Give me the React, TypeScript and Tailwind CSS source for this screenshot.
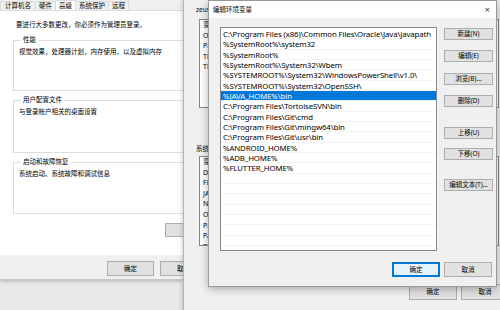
import React from 'react';
import { clsx } from 'clsx';

const paths = [
  'C:\\Program Files (x86)\\Common Files\\Oracle\\Java\\javapath',
  '%SystemRoot%\\system32',
  '%SystemRoot%',
  '%SystemRoot%\\System32\\Wbem',
  '%SYSTEMROOT%\\System32\\WindowsPowerShell\\v1.0\\',
  '%SYSTEMROOT%\\System32\\OpenSSH\\',
  '%JAVA_HOME%\\bin',
  'C:\\Program Files\\TortoiseSVN\\bin',
  'C:\\Program Files\\Git\\cmd',
  'C:\\Program Files\\Git\\mingw64\\bin',
  'C:\\Program Files\\Git\\usr\\bin',
  '%ANDROID_HOME%',
  '%ADB_HOME%',
  '%FLUTTER_HOME%',
];

const userVars = ['变', 'Or', 'Pa', 'TE', 'TM'];
const sysVars = ['变', 'Dr', 'FL', 'JA', 'NU', 'OS', 'Pa', 'PA', 'PR'];

const tabs = [
  { label: '计算机名', w: 'w-[36px]' },
  { label: '硬件', w: 'w-[21px]' },
  { label: '高级', w: 'w-[21px]', active: true },
  { label: '系统保护', w: 'w-[34px]' },
  { label: '远程', w: 'w-[21px]' },
];

function Btn({ children, className, focused }: { children?: React.ReactNode; className?: string; focused?: boolean }) {
  return (
    <button
      type="button"
      className={clsx(
        'flex items-center justify-center border text-[6.5px] text-black whitespace-nowrap',
        focused ? 'border-[#0078d7] bg-[#e5f1fb] ring-1 ring-inset ring-[#0078d7]' : 'border-[#adadad] bg-[#e1e1e1]',
        className
      )}
    >
      {children}
    </button>
  );
}

function Group({ title, text, className }: { title: string; text: string; className?: string }) {
  return (
    <fieldset className={clsx('border border-[#dcdcdc] ml-[13px] w-[190px] px-[5px] shrink-0', className)}>
      <legend className="ml-[2px] px-[2px] text-[6.5px] leading-[8px]">{title}</legend>
      <p className="mt-[4px] text-[6.5px] leading-[8px] whitespace-nowrap">{text}</p>
    </fieldset>
  );
}

export default function App() {
  const emptyRows = Array.from({ length: 8 });
  return (
    <div className="relative w-[500px] h-[310px] overflow-hidden bg-[#e9e9e9] font-['Noto_Sans','Noto_Sans_CJK_SC',sans-serif] text-black">
      {/* 系统属性 - 高级 */}
      <div className="absolute left-0 top-0 w-[184px] h-[280px] overflow-hidden bg-[#f0f0f0] flex flex-col shadow-[0_1px_4px_rgba(0,0,0,0.25)] border-b border-[#c8c8c8]">
        <div className="h-[10px] flex items-end text-[6.5px] leading-[8px] shrink-0">
          {tabs.map((t) => (
            <div
              key={t.label}
              className={clsx(
                'flex items-center justify-center whitespace-nowrap border border-b-0 border-[#dcdcdc] -ml-px first:ml-0',
                t.w,
                t.active ? 'h-[10px] bg-white relative z-10' : 'h-[9px]'
              )}
            >
              {t.label}
            </div>
          ))}
        </div>
        <div className="h-[245px] bg-white border-t border-[#dcdcdc] flex flex-col shrink-0">
          <p className="ml-[16px] mt-[10px] text-[6.5px] leading-[8px] whitespace-nowrap">要进行大多数更改，你必须作为管理员登录。</p>
          <Group className="mt-[7px] h-[55px]" title="性能" text="视觉效果，处理器计划，内存使用，以及虚拟内存" />
          <Group className="mt-[5px] h-[57px]" title="用户配置文件" text="与登录帐户相关的桌面设置" />
          <Group className="mt-[5px] h-[56px]" title="启动和故障恢复" text="系统启动、系统故障和调试信息" />
          <div className="flex mt-[9px] ml-[165px]">
            <Btn className="w-[84px] h-[14px] shrink-0">环境变量(N)...</Btn>
          </div>
        </div>
        <div className="flex gap-[6px] ml-[107px] mt-[6px]">
          <Btn className="w-[47px] h-[15px] shrink-0">确定</Btn>
          <Btn className="w-[47px] h-[15px] shrink-0">取消</Btn>
        </div>
      </div>

      {/* 环境变量 */}
      <div className="absolute left-[183px] top-0 w-[330px] h-[330px] bg-[#f0f0f0] border-l border-[#b4b4b4] shadow-[0_0_5px_rgba(0,0,0,0.25)] flex flex-col">
        <p className="ml-[12px] mt-[6px] text-[6.5px] leading-[8px] whitespace-nowrap">zeus 的用户变量(U)</p>
        <div className="ml-[15px] mt-[5px] w-[300px] h-[89px] bg-white border border-[#828790] text-[7px] leading-[10.6px]">
          {userVars.map((v) => (
            <div key={v} className="pl-[3px] h-[10.6px]">{v}</div>
          ))}
        </div>
        <p className="ml-[12px] mt-[37px] text-[6.5px] leading-[8px] whitespace-nowrap">系统变量(S)</p>
        <div className="ml-[15px] mt-[3px] w-[300px] h-[90px] overflow-hidden bg-white border border-[#828790] text-[7px] leading-[10.6px]">
          {sysVars.map((v) => (
            <div key={v} className="pl-[3px] h-[10.6px]">{v}</div>
          ))}
        </div>
        <div className="flex gap-[4px] ml-[225px] mt-[38px]">
          <Btn className="w-[48px] h-[16px] shrink-0">确定</Btn>
          <Btn className="w-[48px] h-[16px] shrink-0">取消</Btn>
        </div>
      </div>

      {/* 编辑环境变量 */}
      <div className="absolute left-[208px] top-0 w-[289px] h-[287px] bg-[#f0f0f0] border border-[#9a9a9a] shadow-[0_2px_8px_rgba(0,0,0,0.3)] flex flex-col">
        <div className="h-[17px] bg-white flex items-center justify-between pl-[4px] pr-[6px]">
          <span className="text-[6.5px] leading-[8px]">编辑环境变量</span>
          <span className="text-[9px] leading-[9px] text-[#333]">×</span>
        </div>
        <div className="flex mt-[9px]">
          <div className="ml-[11px] w-[217px] h-[224px] bg-white border border-[#828790] overflow-hidden pt-[1px] text-[7.8px] leading-[10.33px] tracking-[-0.1px]">
            {paths.map((p, i) => (
              <div
                key={p}
                className={clsx(
                  'h-[10.33px] pl-[2px] whitespace-nowrap border-b border-[#f4f4f4]',
                  i === 6 ? 'bg-[#0078d7] text-white' : ''
                )}
              >
                {p}
              </div>
            ))}
            {emptyRows.map((_, i) => (
              <div key={i} className="h-[10.33px] border-b border-[#f4f4f4]" />
            ))}
          </div>
          <div className="ml-[7px] flex flex-col">
            <Btn className="mt-[1px] w-[49px] h-[12px]">新建(N)</Btn>
            <Btn className="mt-[10px] w-[49px] h-[12px]">编辑(E)</Btn>
            <Btn className="mt-[11px] w-[49px] h-[12px]">浏览(B)...</Btn>
            <Btn className="mt-[10px] w-[49px] h-[12px]">删除(D)</Btn>
            <Btn className="mt-[20px] w-[49px] h-[12px]">上移(U)</Btn>
            <Btn className="mt-[9px] w-[49px] h-[12px]">下移(O)</Btn>
            <Btn className="mt-[19px] w-[49px] h-[12px]">编辑文本(T)...</Btn>
          </div>
        </div>
        <div className="flex gap-[4px] ml-[183px] mt-[11px]">
          <Btn focused className="w-[48px] h-[15px] shrink-0">确定</Btn>
          <Btn className="w-[48px] h-[15px] shrink-0">取消</Btn>
        </div>
      </div>
    </div>
  );
}
